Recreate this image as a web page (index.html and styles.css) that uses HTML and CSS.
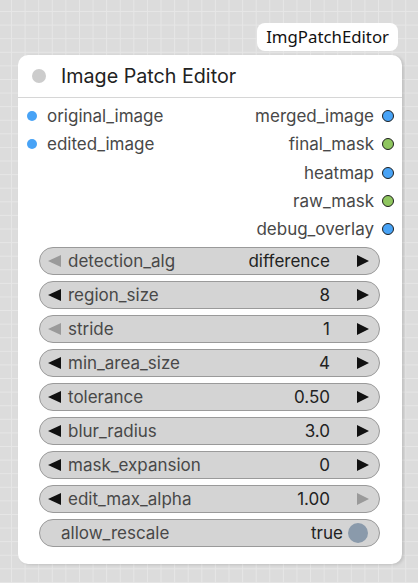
FILE: index.html
```html
<!DOCTYPE html>
<html lang="en">

<head>
    <meta charset="UTF-8">
    <meta name="viewport" content="width=device-width, initial-scale=1.0">
    <title>Image Patch Editor</title>
    <link rel="stylesheet" href="styles.css">
</head>

<body>
    <div class="canvas">
        <div class="node-wrap">
            <div class="badge">ImgPatchEditor</div>
            <div class="node">
                <div class="node-title">
                    <span class="title-dot"></span>
                    <span class="title-text">Image Patch Editor</span>
                </div>

                <div class="slots">
                    <div class="slot-col inputs">
                        <div class="slot"><span class="dot dot-in"></span>original_image</div>
                        <div class="slot"><span class="dot dot-in"></span>edited_image</div>
                    </div>
                    <div class="slot-col outputs">
                        <div class="slot">merged_image<span class="dot dot-out blue"></span></div>
                        <div class="slot">final_mask<span class="dot dot-out green"></span></div>
                        <div class="slot">heatmap<span class="dot dot-out blue"></span></div>
                        <div class="slot">raw_mask<span class="dot dot-out green"></span></div>
                        <div class="slot">debug_overlay<span class="dot dot-out blue"></span></div>
                    </div>
                </div>

                <div class="widgets">
                    <div class="widget">
                        <span class="arrow left off"></span>
                        <span class="w-label">detection_alg</span>
                        <span class="w-value">difference</span>
                        <span class="arrow right"></span>
                    </div>
                    <div class="widget">
                        <span class="arrow left"></span>
                        <span class="w-label">region_size</span>
                        <span class="w-value">8</span>
                        <span class="arrow right"></span>
                    </div>
                    <div class="widget">
                        <span class="arrow left off"></span>
                        <span class="w-label">stride</span>
                        <span class="w-value">1</span>
                        <span class="arrow right"></span>
                    </div>
                    <div class="widget">
                        <span class="arrow left"></span>
                        <span class="w-label">min_area_size</span>
                        <span class="w-value">4</span>
                        <span class="arrow right"></span>
                    </div>
                    <div class="widget">
                        <span class="arrow left"></span>
                        <span class="w-label">tolerance</span>
                        <span class="w-value">0.50</span>
                        <span class="arrow right"></span>
                    </div>
                    <div class="widget">
                        <span class="arrow left"></span>
                        <span class="w-label">blur_radius</span>
                        <span class="w-value">3.0</span>
                        <span class="arrow right"></span>
                    </div>
                    <div class="widget">
                        <span class="arrow left"></span>
                        <span class="w-label">mask_expansion</span>
                        <span class="w-value">0</span>
                        <span class="arrow right"></span>
                    </div>
                    <div class="widget">
                        <span class="arrow left"></span>
                        <span class="w-label">edit_max_alpha</span>
                        <span class="w-value">1.00</span>
                        <span class="arrow right off"></span>
                    </div>
                    <div class="widget toggle">
                        <span class="w-label">allow_rescale</span>
                        <span class="w-value">true</span>
                        <span class="knob"></span>
                    </div>
                </div>
            </div>
        </div>
    </div>
</body>

</html>
```

FILE: styles.css
```css
html,
body {
    margin: 0;
    height: 100%;
}

body {
    font-family: Inter, 'Noto Sans', sans-serif;
    background-color: #dcdcdc;
    background-image:
        linear-gradient(to right, #e6e6e6 1px, transparent 1px),
        linear-gradient(to bottom, #e6e6e6 1px, transparent 1px);
    background-size: 13.6px 13.6px;
    background-position: 11px 11px;
    overflow: hidden;
}

.canvas {
    padding: 23px 16px 0 18px;
}

.node-wrap {
    width: 384px;
    display: flex;
    flex-direction: column;
    align-items: flex-end;
}

.badge {
    background: #fff;
    border-radius: 8px;
    height: 28px;
    padding: 0 9px;
    margin-right: 4px;
    margin-bottom: 4px;
    font-family: 'Noto Sans', sans-serif;
    font-size: 16.8px;
    line-height: 28px;
    color: #111;
}

.node {
    align-self: stretch;
    background: #fff;
    border-radius: 10px;
    box-shadow: 2px 1px 3px rgba(0, 0, 0, 0.12);
    padding-bottom: 17px;
}

.node-title {
    height: 42px;
    display: flex;
    align-items: center;
    border-bottom: 1px solid #d6d6d6;
}

.title-dot {
    width: 14px;
    height: 14px;
    border-radius: 50%;
    background: #cccccc;
    margin-left: 14px;
    margin-right: 15px;
}

.title-text {
    font-size: 19.7px;
    color: #222;
}

.slots {
    display: flex;
    justify-content: space-between;
    padding-top: 4px;
    font-size: 17px;
    color: #484848;
}

.slot {
    height: 28.3px;
    display: flex;
    align-items: center;
}

.inputs .slot {
    padding-left: 9px;
}

.outputs .slot {
    justify-content: flex-end;
    padding-right: 8px;
}

.dot {
    border-radius: 50%;
    box-sizing: border-box;
}

.dot-in {
    width: 10px;
    height: 10px;
    background: #48a3f6;
    margin-right: 10px;
}

.dot-out {
    width: 12px;
    height: 12px;
    border: 1.5px solid #1e1e1e;
    margin-left: 8px;
}

.blue {
    background: #48a3f6;
}

.green {
    background: #8fc65f;
}

.widgets {
    display: flex;
    flex-direction: column;
    gap: 5.9px;
    padding: 4px 22px 0 21px;
}

.widget {
    height: 28px;
    box-sizing: border-box;
    border: 1px solid #9a9a9a;
    border-radius: 14px;
    background: #d4d4d4;
    display: flex;
    align-items: center;
    font-size: 17px;
}

.arrow {
    width: 0;
    height: 0;
    border-top: 6.5px solid transparent;
    border-bottom: 6.5px solid transparent;
}

.arrow.left {
    border-right: 13px solid #111;
    margin-left: 8px;
    margin-right: 7px;
}

.arrow.right {
    border-left: 12px solid #111;
    margin-left: 27px;
    margin-right: 10px;
}

.arrow.left.off {
    border-right-color: #9a9a9a;
}

.arrow.right.off {
    border-left-color: #9a9a9a;
}

.w-label {
    flex: 1;
    color: #484848;
}

.w-value {
    color: #222;
}

.toggle .w-label {
    padding-left: 21px;
}

.knob {
    width: 20px;
    height: 20px;
    border-radius: 50%;
    background: #8a9aab;
    margin-left: 5px;
    margin-right: 11px;
}
```
